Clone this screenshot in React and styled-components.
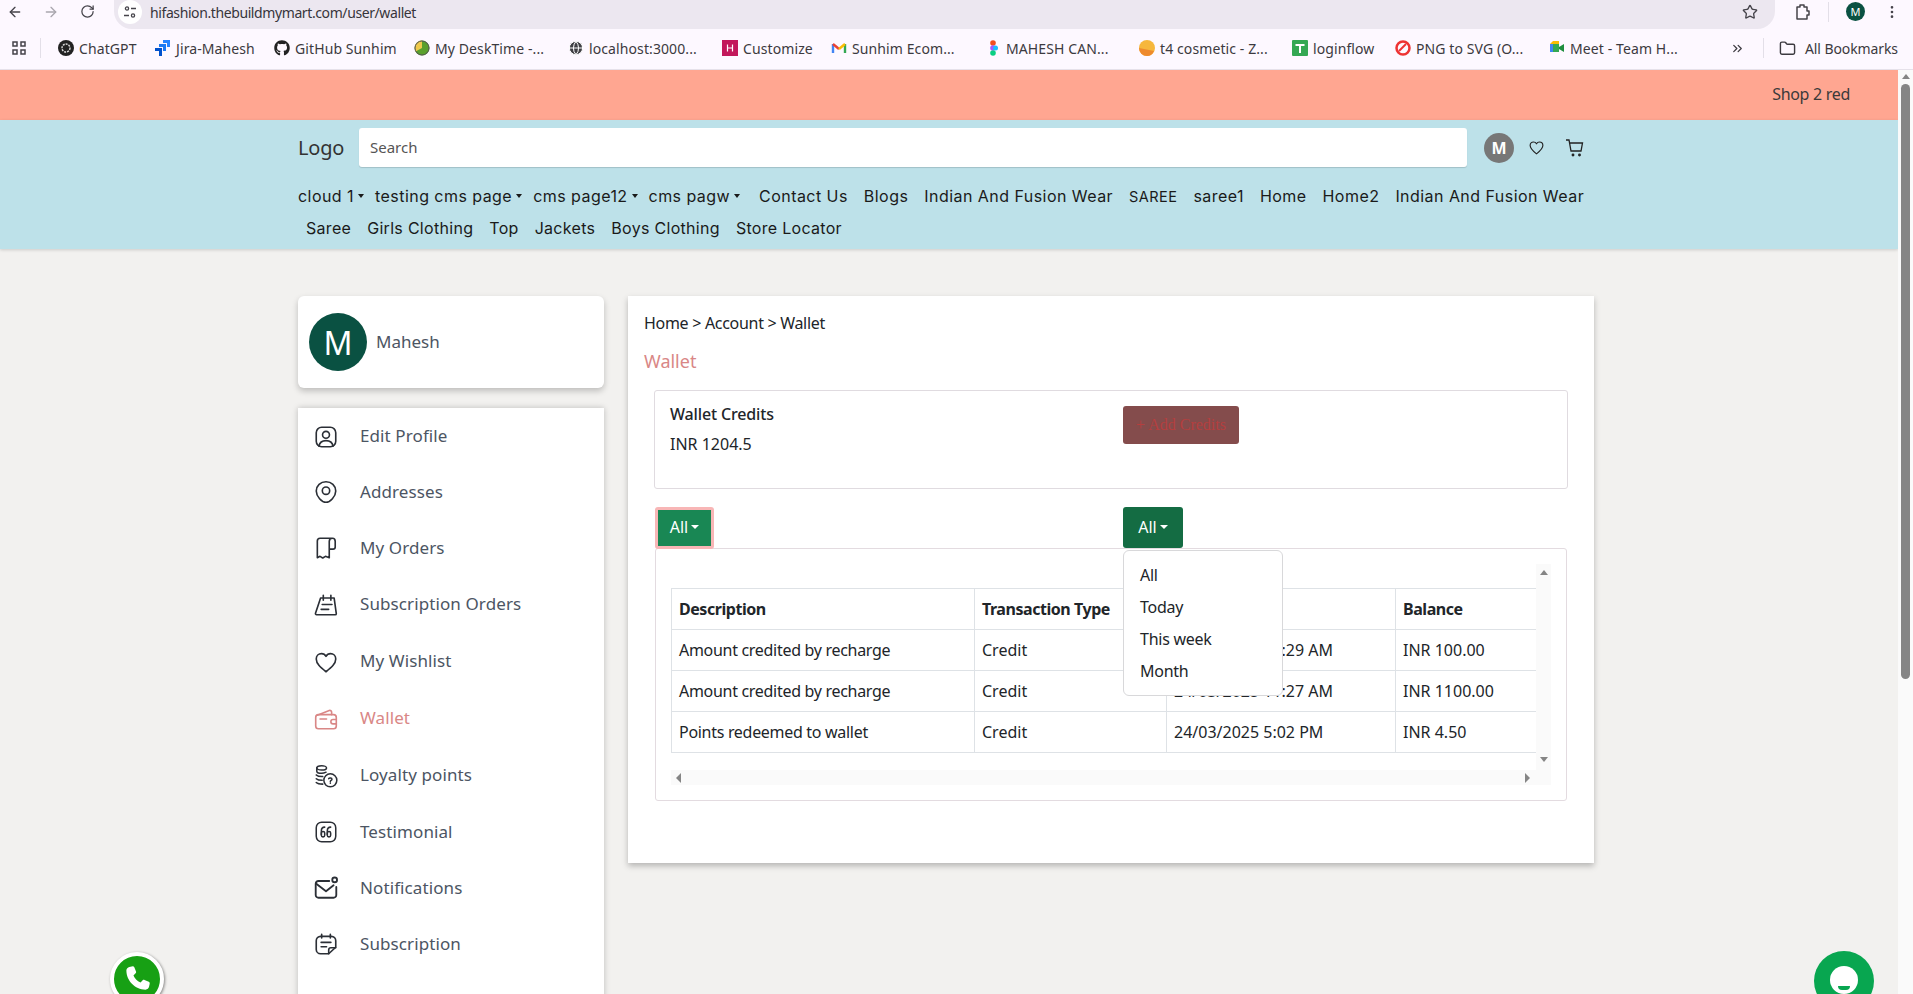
import React from 'react';
import styled, { createGlobalStyle } from 'styled-components';
import { ArrowLeft, ArrowRight, RotateCw, Star, MoreVertical, Folder, ChevronsRight, Globe } from 'lucide-react';
import { FaGithub } from 'react-icons/fa';

const UI_FONT = '"Noto Sans", "Open Sans", sans-serif';
const NAV_FONT = 'Inter, "Noto Sans", sans-serif';

const GlobalStyle = createGlobalStyle`
	html, body {
		margin: 0;
		padding: 0;
		height: 994px;
		overflow: hidden;
		background: #f2f1ef;
		font-family: ${UI_FONT};
	}
	* { box-sizing: border-box; }
`;

const Screen = styled.div`
	position: relative;
	width: 1913px;
	height: 994px;
	overflow: hidden;
	display: flex;
	flex-direction: column;
`;

/* browser chrome */
const TopBar = styled.div`
	height: 29px;
	background: #fdf8ff;
	display: flex;
	align-items: center;
	gap: 6px;
`;
const NavIcon = styled.div`
	width: 30px;
	display: flex;
	justify-content: center;
	padding-bottom: 6px;
	color: ${props => (props.$dim ? '#a9a6ae' : '#45434a')};
`;
const AddressBar = styled.div`
	flex: 1;
	height: 29px;
	margin-left: 6px;
	background: #ece7f0;
	border-radius: 0 0 18px 18px;
	display: flex;
	align-items: center;
	padding: 0 17px 5px 4px;
	font-size: 14px;
	color: #37353b;
	letter-spacing: -0.4px;
`;
const SiteBadge = styled.div`
	width: 24px;
	height: 24px;
	margin-right: 8px;
	background: #fff;
	border-radius: 50%;
	display: flex;
	align-items: center;
	justify-content: center;
`;
const UrlText = styled.span`
	flex: 1;
`;
const TopActions = styled.div`
	display: flex;
	align-items: center;
	width: 132px;
	padding: 0 0 6px 12px;
	color: #45434a;
	gap: 17px;
`;
const ProfileDot = styled.div`
	width: 19px;
	height: 19px;
	margin-right: 2px;
	border-radius: 50%;
	background: #0a5142;
	color: #fff;
	font-size: 11px;
	display: flex;
	align-items: center;
	justify-content: center;
`;
const BookmarkBar = styled.div`
	height: 41px;
	background: #fdf8ff;
	border-bottom: 1px solid #e6e1ea;
	display: flex;
	align-items: center;
	padding: 0 0 2px 12px;
`;
const AppsCell = styled.div`
	width: 46px;
	display: flex;
	align-items: center;
	gap: 14px;
`;
const Separator = styled.div`
	width: 1px;
	height: 20px;
	background: #e3dfe8;
`;
const Bookmark = styled.div`
	width: ${props => props.$width}px;
	display: flex;
	align-items: center;
	gap: 5px;
	font-size: 14px;
	color: #3c3a40;
	letter-spacing: 0.1px;
	white-space: nowrap;
`;
const AllBookmarks = styled(Bookmark)`
	padding-left: 15px;
	gap: 9px;
	letter-spacing: -0.1px;
`;
const FaviconBox = styled.span`
	width: 16px;
	height: 16px;
	flex: none;
	display: flex;
	align-items: center;
	justify-content: center;
`;

/* page */
const Viewport = styled.div`
	flex: 1;
	display: flex;
	min-height: 0;
`;
const Page = styled.div`
	flex: 1;
	min-width: 0;
`;
const Scrollbar = styled.div`
	width: 15px;
	background: #fafafa;
	display: flex;
	flex-direction: column;
	align-items: center;
	padding-top: 4px;
`;
const ScrollThumb = styled.div`
	width: 9px;
	height: 595px;
	margin-top: 5px;
	border-radius: 5px;
	background: #858585;
`;
const ArrowUp = styled.div`
	width: 0;
	height: 0;
	border-left: 4.5px solid transparent;
	border-right: 4.5px solid transparent;
	border-bottom: 5px solid ${props => props.$color || '#858585'};
`;
const ArrowDown = styled(ArrowUp)`
	border-bottom: 0;
	border-top: 5px solid ${props => props.$color || '#858585'};
`;
const ArrowLeftTip = styled.div`
	width: 0;
	height: 0;
	border-top: 5px solid transparent;
	border-bottom: 5px solid transparent;
	border-right: 5px solid #858585;
`;
const ArrowRightTip = styled.div`
	width: 0;
	height: 0;
	border-top: 5px solid transparent;
	border-bottom: 5px solid transparent;
	border-left: 5px solid #858585;
`;

const Banner = styled.div`
	height: 50px;
	background: #ffa691;
	display: flex;
	align-items: center;
	justify-content: flex-end;
	padding: 0 48px 2px 0;
	font-size: 16px;
	letter-spacing: -0.3px;
	color: #3b3a3a;
`;
const Header = styled.header`
	height: 129px;
	background: #bde1e9;
	box-shadow: 0 1px 3px rgba(0, 0, 0, 0.16);
	padding: 8px 0 0 298px;
`;
const HeaderTop = styled.div`
	display: flex;
	align-items: center;
	height: 39px;
`;
const Logo = styled.div`
	width: 61px;
	font-size: 20px;
	letter-spacing: -0.2px;
	color: #333;
`;
const SearchBox = styled.div`
	width: 1108px;
	height: 39px;
	background: #fff;
	border-radius: 3px;
	box-shadow: 0 1px 1px rgba(0, 0, 0, 0.15);
	display: flex;
	align-items: center;
	padding: 0 0 2px 11px;
	font-size: 15px;
	color: #555;
`;
const HeaderAvatar = styled.div`
	width: 30px;
	height: 30px;
	margin-left: 17px;
	border-radius: 50%;
	background: #777;
	color: #fff;
	font-size: 16px;
	font-weight: 700;
	display: flex;
	align-items: center;
	justify-content: center;
`;
const HeaderIcon = styled.div`
	margin-left: ${props => props.$left}px;
	display: flex;
	color: #222;
`;
const NavRow = styled.nav`
	display: flex;
	align-items: center;
	height: 32px;
	font-family: ${NAV_FONT};
	font-size: 16px;
	letter-spacing: ${props => props.$spacing}px;
	color: #1a1a1a;
	margin-top: ${props => props.$top || 0}px;
`;
const NavDrop = styled.span`
	display: inline-flex;
	align-items: center;
	margin-right: 11px;
	white-space: nowrap;
	&::after {
		content: '';
		margin-left: 4px;
		border-top: 4px solid #1a1a1a;
		border-left: 3.5px solid transparent;
		border-right: 3.5px solid transparent;
	}
`;
const NavLink = styled.span`
	padding: 0 8px;
	white-space: nowrap;
	font-size: ${props => props.$size || 16}px;
`;

const Content = styled.main`
	display: grid;
	grid-template-columns: 306px 966px;
	column-gap: 24px;
	align-items: start;
	padding: 47px 0 0 298px;
`;
const Sidebar = styled.aside`
	display: flex;
	flex-direction: column;
	gap: 20px;
`;
const ProfileCard = styled.div`
	height: 92px;
	background: #fff;
	border-radius: 6px;
	box-shadow: 0 3px 6px rgba(0, 0, 0, 0.22);
	display: flex;
	align-items: center;
	padding-left: 11px;
	gap: 9px;
`;
const ProfileAvatar = styled.div`
	width: 58px;
	height: 58px;
	border-radius: 50%;
	background: #0a5142;
	color: #fff;
	font-size: 32px;
	display: flex;
	align-items: center;
	justify-content: center;
`;
const ProfileName = styled.div`
	font-size: 17px;
	padding-bottom: 2px;
	color: #4c5563;
`;
const MenuCard = styled.div`
	height: 640px;
	background: #fff;
	box-shadow: 0 0 6px rgba(0, 0, 0, 0.22);
`;
const MenuItem = styled.div`
	height: ${props => props.$height || 56}px;
	display: flex;
	align-items: center;
	padding-left: 13px;
	gap: 19px;
	font-size: 17px;
	letter-spacing: 0.1px;
	color: ${props => (props.$active ? '#d98786' : '#4c5563')};
`;
const MenuIcon = styled.span`
	width: 30px;
	height: 30px;
	flex: none;
	display: flex;
	align-items: center;
	justify-content: center;
	margin-top: 2px;
	color: ${props => (props.$active ? '#d98786' : '#2b2f36')};
`;

const MainCard = styled.section`
	position: relative;
	height: 567px;
	background: #fff;
	box-shadow: 0 3px 6px rgba(0, 0, 0, 0.25);
	padding: 16px 16px 0 16px;
`;
const Breadcrumb = styled.div`
	font-size: 16px;
	line-height: 22px;
	letter-spacing: -0.3px;
	color: #212529;
`;
const PageTitle = styled.h1`
	margin: 15px 0 0;
	font-size: 18px;
	line-height: 24px;
	font-weight: 400;
	color: #d98786;
`;
const CreditsBox = styled.div`
	width: 914px;
	height: 99px;
	margin: 17px 0 0 10px;
	border: 1px solid #e0dbe0;
	border-radius: 3px;
	display: grid;
	grid-template-columns: 453px 1fr;
	padding: 15px 0 0 15px;
`;
const CreditsTitle = styled.div`
	margin-top: -2px;
	font-size: 16px;
	line-height: 20px;
	font-weight: 500;
	letter-spacing: -0.15px;
	color: #212529;
`;
const CreditsValue = styled.div`
	margin-top: 10px;
	font-size: 16px;
	line-height: 20px;
	color: #212529;
`;
const AddCredits = styled.div`
	width: 116px;
	height: 38px;
	border-radius: 3px;
	background: #844c4c;
	color: #b43f3f;
	font-family: "Liberation Serif", serif;
	font-size: 16px;
	display: flex;
	align-items: center;
	justify-content: center;
`;
const FilterRow = styled.div`
	display: grid;
	grid-template-columns: 468px 60px;
	margin: 18px 0 0 11px;
	height: 41px;
`;
const FilterButton = styled.div`
	width: ${props => (props.$focus ? 59 : 60)}px;
	height: ${props => (props.$focus ? 42 : 41)}px;
	background: ${props => (props.$focus ? '#198754' : '#146c43')};
	border: ${props => (props.$focus ? '3px solid #f8b6b6' : '0')};
	border-radius: 3px;
	color: #fff;
	font-size: 16px;
	padding-bottom: 2px;
	display: flex;
	align-items: center;
	justify-content: center;
	gap: 3px;
	&::after {
		content: '';
		border-top: 4px solid #fff;
		border-left: 4px solid transparent;
		border-right: 4px solid transparent;
	}
`;
const TableBox = styled.div`
	width: 912px;
	height: 253px;
	margin: 0 0 0 11px;
	border: 1px solid #e3dbe0;
	border-radius: 3px;
	padding: 15px 0 0 15px;
`;
const ScrollFrame = styled.div`
	display: grid;
	grid-template-columns: 865px 15px;
	grid-template-rows: 206px 15px;
	width: 880px;
`;
const TableArea = styled.div`
	padding-top: 24px;
	overflow: hidden;
`;
const WalletTable = styled.table`
	width: 865px;
	border-collapse: collapse;
	table-layout: fixed;
	font-size: 16px;
	color: #212529;
	th, td {
		height: 41px;
		padding: 0 7px;
		border: 1px solid #dee2e6;
		text-align: left;
		white-space: nowrap;
	}
	th {
		font-weight: 700;
		letter-spacing: -0.45px;
	}
	td:first-child { letter-spacing: -0.3px; }
`;
const VScroll = styled.div`
	background: #fafafa;
	display: flex;
	flex-direction: column;
	align-items: center;
	justify-content: space-between;
	padding: 6px 0 8px;
`;
const HScroll = styled.div`
	background: #fafafa;
	display: flex;
	align-items: center;
	justify-content: space-between;
	padding: 0 6px 0 5px;
`;
const Corner = styled.div`
	background: #fafafa;
`;
const DropdownMenu = styled.ul`
	position: absolute;
	left: 495px;
	top: 254px;
	width: 160px;
	height: 146px;
	margin: 0;
	padding: 8px 0;
	list-style: none;
	background: #fff;
	border: 1px solid #d8d8da;
	border-radius: 6px;
	font-size: 16px;
	letter-spacing: -0.25px;
	color: #212529;
`;
const DropdownItem = styled.li`
	height: 32px;
	display: flex;
	align-items: center;
	padding-left: 16px;
`;

const WhatsApp = styled.div`
	position: absolute;
	left: 110px;
	top: 952px;
	width: 54px;
	height: 54px;
	border-radius: 50%;
	background: #17a014;
	border: 4px solid #fff;
	box-shadow: 1px 1px 3px rgba(0, 0, 0, 0.45);
	display: flex;
	align-items: center;
	justify-content: center;
`;
const ChatBubble = styled.div`
	position: absolute;
	left: 1814px;
	top: 951px;
	width: 60px;
	height: 60px;
	border-radius: 50%;
	background: #08a650;
	display: flex;
	justify-content: center;
	padding-top: 15px;
`;
const ChatFace = styled.div`
	position: relative;
	width: 28px;
	height: 28px;
	border-radius: 50%;
	background: #fff;
	&::after {
		content: '';
		position: absolute;
		left: 8px;
		top: 20px;
		width: 12px;
		height: 4px;
		background: #08a650;
		border-radius: 0 0 6px 6px;
	}
`;

const Svg = ({ size = 26, children, stroke = 'currentColor', width = 1.5 }) => (
	<svg width={size} height={size} viewBox="0 0 24 24" fill="none" stroke={stroke} strokeWidth={width} strokeLinecap="round" strokeLinejoin="round">
		{children}
	</svg>
);

const heartPath = <path d="M12 21C7 17 3 13.700 3 9.200 3 6.300 5.200 4.300 7.800 4.300c1.800 0 3.300.9 4.200 2.500.9-1.600 2.400-2.500 4.200-2.500C18.800 4.300 21 6.300 21 9.200c0 4.500-4 7.800-9 11.800z" />;

const icons = {
	profile: <Svg><rect x="3" y="3" width="18" height="18" rx="5" /><circle cx="12" cy="10" r="3.200" /><path d="M5.500 20.500c.6-3.600 3.200-5.200 6.500-5.200s5.900 1.600 6.500 5.200" /></Svg>,
	pin: <Svg><path d="M12 2.500c5 0 9 3.800 9 8.600 0 5-5.200 10.400-9 10.400s-9-5.400-9-10.400c0-4.800 4-8.600 9-8.600z" /><circle cx="12" cy="10.800" r="3.400" /></Svg>,
	orders: <Svg><path d="M18 3H6.500C5 3 4 4.200 4 5.500V21l2.500-1.300 2.500 1.500 2.500-1.500 3.500 1.300V6c0-1.700 1.300-3 3-3s2.500 1.300 2.500 3v5c0 1.200-.8 2-2 2h-3" /></Svg>,
	subOrders: <Svg><path d="M7 5.500h12.500l2 14.500a1 1 0 0 1-1 1H3.300a1 1 0 0 1-1-1.300z" /><path d="M9.500 3v4.500M16.500 3v4.500M8.500 11.500h9M7.500 16h7" /></Svg>,
	heart: <Svg>{heartPath}</Svg>,
	wallet: <Svg><path d="M4 8.500 15 4.200c1.100-.4 2.200.4 2.200 1.500V8" /><rect x="2.500" y="8" width="19" height="13" rx="2.500" /><path d="M21.500 12.500h-3a2 2 0 0 0 0 4h3M6.500 12h6" /></Svg>,
	coins: <Svg width={1.4}><ellipse cx="8" cy="4.500" rx="4.500" ry="2" /><path d="M3.500 4.500v3c0 1 2 2 4.500 2s3-.5 4-1M3 11c1 1 3 1.600 6 1.500M3 14.500c1 1 3 1.500 5.500 1.500M3 18c1 1 3 1.500 6 1.500" /><circle cx="16" cy="16" r="6" /><path d="M14.500 14.500c.5-1 3-1 3 .5 0 1-1.500 1-1.500 2M16 18.500v.2" /></Svg>,
	quote: <Svg width={1.4}><rect x="3" y="3" width="18" height="18" rx="5" /><path d="M10.800 7.500C9 7.500 7.700 9 7.700 11v3.500M16.300 7.500c-1.800 0-3.100 1.500-3.100 3.500v3.500" /><rect x="7.700" y="11.500" width="3.100" height="5" rx="1.500" /><rect x="13.200" y="11.500" width="3.100" height="5" rx="1.500" /></Svg>,
	mail: <Svg width={1.7}><path d="M15 5.500H5a2.500 2.500 0 0 0-2.500 2.500v10.500A2.500 2.500 0 0 0 5 21h14a2.500 2.500 0 0 0 2.500-2.500V11" /><path d="m3 8 9 7 7-5.500" /><circle cx="20" cy="4.500" r="2.200" /></Svg>,
	note: <Svg><path d="M14.500 21H7a4 4 0 0 1-4-4V9a4 4 0 0 1 4-4h10a4 4 0 0 1 4 4v6z" /><path d="M8 3v3.500M16 3v3.500M7.500 10.500h9M7.500 14.500h5M14.500 21v-3.500a2 2 0 0 1 2-2H21" /></Svg>,
};

const menu = [
	{ label: 'Edit Profile', icon: 'profile', height: 55 },
	{ label: 'Addresses', icon: 'pin' },
	{ label: 'My Orders', icon: 'orders' },
	{ label: 'Subscription Orders', icon: 'subOrders', height: 57 },
	{ label: 'My Wishlist', icon: 'heart', height: 57 },
	{ label: 'Wallet', icon: 'wallet', active: true, height: 57 },
	{ label: 'Loyalty points', icon: 'coins', height: 57 },
	{ label: 'Testimonial', icon: 'quote' },
	{ label: 'Notifications', icon: 'mail' },
	{ label: 'Subscription', icon: 'note' },
];

const rows = [
	['Amount credited by recharge', 'Credit', '24/03/2025 11:29 AM', 'INR 100.00'],
	['Amount credited by recharge', 'Credit', '24/03/2025 11:27 AM', 'INR 1100.00'],
	['Points redeemed to wallet', 'Credit', '24/03/2025 5:02 PM', 'INR 4.50'],
];

const Favicon = ({ kind }) => {
	switch (kind) {
		case 'gpt':
			return <svg width="16" height="16" viewBox="0 0 16 16"><circle cx="8" cy="8" r="8" fill="#222" /><circle cx="8" cy="8" r="4" fill="none" stroke="#ddd" strokeWidth="1.400" strokeDasharray="2 1" /></svg>;
		case 'jira':
			return <svg width="16" height="16" viewBox="0 0 16 16"><path d="M8 0h7v7h-3V3H8z" fill="#2684ff" /><path d="M4 4h7v7H8V7H4z" fill="#1d7af2" /><path d="M0 8h7v8H4v-5H0z" fill="#0052cc" /></svg>;
		case 'github':
			return <FaGithub size={16} color="#222" />;
		case 'desk':
			return <svg width="16" height="16" viewBox="0 0 16 16"><circle cx="8" cy="8" r="7.500" fill="#5aa02c" /><path d="M8 8V.5A7.500 7.500 0 0 0 1.500 11.500z" fill="#efc94c" /><circle cx="8" cy="8" r="7" fill="none" stroke="#555" /></svg>;
		case 'globe':
			return <Globe size={16} color="#fff" fill="#3f3f44" strokeWidth={1.500} />;
		case 'hub':
			return <svg width="16" height="16" viewBox="0 0 16 16"><rect width="16" height="16" fill="#c2185b" /><path d="M5.500 4.500v7M10.500 4.500v7M5.500 8h5" stroke="#fff" strokeWidth="1.200" /></svg>;
		case 'gmail':
			return <svg width="16" height="16" viewBox="0 0 16 16" fill="none" strokeWidth="2.400"><path d="M2 13V4" stroke="#4285f4" /><path d="M14 13V4" stroke="#34a853" /><path d="M2 4l6 5" stroke="#ea4335" /><path d="M14 4 8 9" stroke="#fbbc04" /></svg>;
		case 'figma':
			return <svg width="16" height="16" viewBox="0 0 16 16"><circle cx="8" cy="3" r="2.800" fill="#f24e1e" /><circle cx="8" cy="8" r="2.800" fill="#a259ff" /><circle cx="8" cy="13" r="2.800" fill="#0acf83" /><circle cx="10.500" cy="8" r="2.500" fill="#1abcfe" /></svg>;
		case 't4':
			return <svg width="16" height="16" viewBox="0 0 16 16"><circle cx="8" cy="8" r="8" fill="#f6b73c" /><path d="M0 8a8 8 0 0 0 8 8c3 0 6-2 7-5z" fill="#ee8a2d" /></svg>;
		case 'sheet':
			return <svg width="16" height="16" viewBox="0 0 16 16"><rect width="16" height="16" rx="1" fill="#34a853" /><path d="M3.500 5h9M8 5v8" stroke="#fff" strokeWidth="2" /></svg>;
		case 'png':
			return <svg width="16" height="16" viewBox="0 0 16 16" fill="none"><circle cx="8" cy="8" r="6.500" stroke="#ee3333" strokeWidth="2.500" /><path d="M4 11 11 4" stroke="#ee3333" strokeWidth="2" /></svg>;
		default:
			return <svg width="16" height="16" viewBox="0 0 16 16"><rect x="1" y="4" width="9" height="8" fill="#34a853" /><path d="M1 4l3-3h6v3z" fill="#fbbc04" /><path d="M1 4h3v8H1z" fill="#4285f4" /><path d="M10 7l5-3v8l-5-3z" fill="#1e8e3e" /></svg>;
	}
};

const bookmarks = [
	{ label: 'ChatGPT', kind: 'gpt', width: 97 },
	{ label: 'Jira-Mahesh', kind: 'jira', width: 119 },
	{ label: 'GitHub Sunhim', kind: 'github', width: 140 },
	{ label: 'My DeskTime -...', kind: 'desk', width: 154 },
	{ label: 'localhost:3000...', kind: 'globe', width: 154 },
	{ label: 'Customize', kind: 'hub', width: 109 },
	{ label: 'Sunhim Ecom...', kind: 'gmail', width: 154 },
	{ label: 'MAHESH CAN...', kind: 'figma', width: 154 },
	{ label: 't4 cosmetic - Z...', kind: 't4', width: 153 },
	{ label: 'loginflow', kind: 'sheet', width: 103 },
	{ label: 'PNG to SVG (O...', kind: 'png', width: 154 },
	{ label: 'Meet - Team H...', kind: 'meet', width: 181 },
];

export default function App() {
	return (
		<Screen>
			<GlobalStyle />
			<TopBar>
				<NavIcon><ArrowLeft size={16} /></NavIcon>
				<NavIcon $dim><ArrowRight size={16} /></NavIcon>
				<NavIcon><RotateCw size={15} /></NavIcon>
				<AddressBar>
					<SiteBadge>
						<svg width="14" height="14" viewBox="0 0 14 14" fill="none" stroke="#45434a" strokeWidth="1.300"><circle cx="4" cy="3.500" r="1.600" /><path d="M8 3.500h5M1 10.500h5" /><circle cx="10" cy="10.500" r="1.600" /></svg>
					</SiteBadge>
					<UrlText>hifashion.thebuildmymart.com/user/wallet</UrlText>
					<Star size={16} color="#45434a" />
				</AddressBar>
				<TopActions>
					<svg width="18" height="18" viewBox="0 0 18 18" fill="none" stroke="currentColor" strokeWidth="1.500" strokeLinejoin="round"><path d="M4 4h3V2h4v2h3v4h2v4h-2v4H4z" /></svg>
					<Separator />
					<ProfileDot>M</ProfileDot>
					<MoreVertical size={16} />
				</TopActions>
			</TopBar>
			<BookmarkBar>
				<AppsCell>
					<svg width="14" height="14" viewBox="0 0 14 14" fill="none" stroke="#45434a" strokeWidth="1.500"><rect x="1" y="1" width="4" height="4" /><rect x="9" y="1" width="4" height="4" /><rect x="1" y="9" width="4" height="4" /><rect x="9" y="9" width="4" height="4" /></svg>
					<Separator />
				</AppsCell>
				{bookmarks.map(b => (
					<Bookmark key={b.label} $width={b.width}>
						<FaviconBox><Favicon kind={b.kind} /></FaviconBox>
						{b.label}
					</Bookmark>
				))}
				<Bookmark $width={33}><ChevronsRight size={15} /></Bookmark>
				<Separator />
				<AllBookmarks $width={135}>
					<Folder size={17} />
					All Bookmarks
				</AllBookmarks>
			</BookmarkBar>
			<Viewport>
				<Page>
					<Banner>Shop 2 red</Banner>
					<Header>
						<HeaderTop>
							<Logo>Logo</Logo>
							<SearchBox>Search</SearchBox>
							<HeaderAvatar>M</HeaderAvatar>
							<HeaderIcon $left={14}><Svg size={17} width={1.600}>{heartPath}</Svg></HeaderIcon>
							<HeaderIcon $left={20}>
								<svg width="20" height="20" viewBox="0 0 20 20" fill="none" stroke="currentColor" strokeWidth="1.300"><path d="M1 2h3l2 11h10l1.500-8H5" /><circle cx="8" cy="17" r=".8" /><circle cx="14.500" cy="17" r=".8" /></svg>
							</HeaderIcon>
						</HeaderTop>
						<NavRow $top={13} $spacing={0.45}>
							<NavDrop>cloud 1</NavDrop>
							<NavDrop>testing cms page</NavDrop>
							<NavDrop>cms page12</NavDrop>
							<NavDrop>cms pagw</NavDrop>
							<NavLink>Contact Us</NavLink>
							<NavLink>Blogs</NavLink>
							<NavLink>Indian And Fusion Wear</NavLink>
							<NavLink $size={14.5}>SAREE</NavLink>
							<NavLink>saree1</NavLink>
							<NavLink>Home</NavLink>
							<NavLink>Home2</NavLink>
							<NavLink>Indian And Fusion Wear</NavLink>
						</NavRow>
						<NavRow $spacing={0.3}>
							<NavLink>Saree</NavLink>
							<NavLink>Girls Clothing</NavLink>
							<NavLink>Top</NavLink>
							<NavLink>Jackets</NavLink>
							<NavLink>Boys Clothing</NavLink>
							<NavLink>Store Locator</NavLink>
						</NavRow>
					</Header>
					<Content>
						<Sidebar>
							<ProfileCard>
								<ProfileAvatar>M</ProfileAvatar>
								<ProfileName>Mahesh</ProfileName>
							</ProfileCard>
							<MenuCard>
								{menu.map(item => (
									<MenuItem key={item.label} $active={item.active} $height={item.height}>
										<MenuIcon $active={item.active}>{icons[item.icon]}</MenuIcon>
										{item.label}
									</MenuItem>
								))}
							</MenuCard>
						</Sidebar>
						<MainCard>
							<Breadcrumb>Home &gt; Account &gt; Wallet</Breadcrumb>
							<PageTitle>Wallet</PageTitle>
							<CreditsBox>
								<div>
									<CreditsTitle>Wallet Credits</CreditsTitle>
									<CreditsValue>INR 1204.5</CreditsValue>
								</div>
								<AddCredits>+ Add Credits</AddCredits>
							</CreditsBox>
							<FilterRow>
								<FilterButton $focus>All</FilterButton>
								<FilterButton>All</FilterButton>
							</FilterRow>
							<TableBox>
								<ScrollFrame>
									<TableArea>
										<WalletTable>
											<colgroup>
												<col width="303" />
												<col width="192" />
												<col width="229" />
												<col width="141" />
											</colgroup>
											<thead>
												<tr>
													<th>Description</th>
													<th>Transaction Type</th>
													<th>Date</th>
													<th>Balance</th>
												</tr>
											</thead>
											<tbody>
												{rows.map((r, i) => (
													<tr key={i}>
														{r.map((c, j) => <td key={j}>{c}</td>)}
													</tr>
												))}
											</tbody>
										</WalletTable>
									</TableArea>
									<VScroll>
										<ArrowUp />
										<ArrowDown />
									</VScroll>
									<HScroll>
										<ArrowLeftTip />
										<ArrowRightTip />
									</HScroll>
									<Corner />
								</ScrollFrame>
							</TableBox>
							<DropdownMenu>
								<DropdownItem>All</DropdownItem>
								<DropdownItem>Today</DropdownItem>
								<DropdownItem>This week</DropdownItem>
								<DropdownItem>Month</DropdownItem>
							</DropdownMenu>
						</MainCard>
					</Content>
				</Page>
				<Scrollbar>
					<ArrowUp />
					<ScrollThumb />
				</Scrollbar>
			</Viewport>
			<WhatsApp>
				<svg width="34" height="34" viewBox="0 0 24 24" fill="#fff"><path d="M6.600 3.500 9 3c.5 0 .9.300 1.100.700l1.200 3c.2.500 0 1-.3 1.300L9.500 9.500c.8 2 2.500 3.800 5 5l1.500-1.600c.4-.3.900-.4 1.300-.2l3 1.300c.4.200.7.600.7 1.100l-.5 2.400c-.2 1-1.200 2-2.500 2C10.500 19.500 4.500 13 4.500 6c0-1.300 1-2.300 2.100-2.500z" /></svg>
			</WhatsApp>
			<ChatBubble><ChatFace /></ChatBubble>
		</Screen>
	);
}
